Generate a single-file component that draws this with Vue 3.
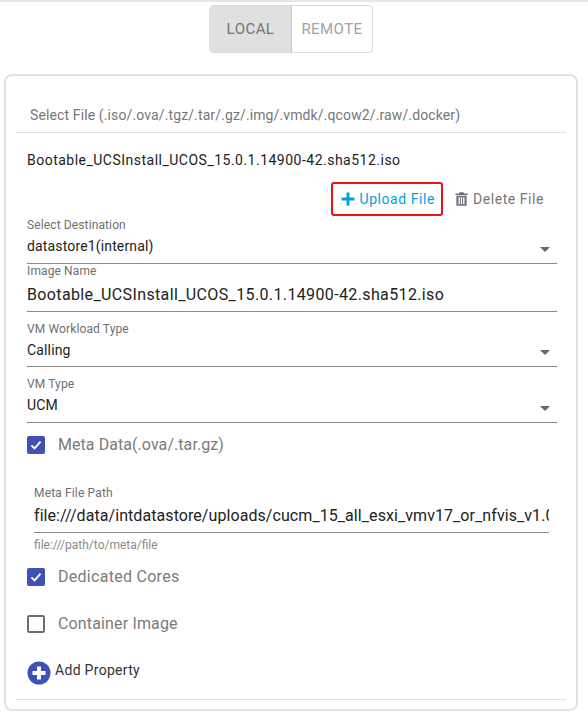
<script setup>
</script>

<template>
  <div class="page">
    <div class="toggle-row">
      <div class="toggle">
        <div class="tab active">LOCAL</div>
        <div class="tab">REMOTE</div>
      </div>
    </div>
    <div class="card">
      <div class="file-select">Select File (.iso/.ova/.tgz/.tar/.gz/.img/.vmdk/.qcow2/.raw/.docker)</div>
      <div class="file-name">Bootable_UCSInstall_UCOS_15.0.1.14900-42.sha512.iso</div>
      <div class="actions">
        <div class="btn upload">
          <svg width="14" height="14" viewBox="0 0 14 14"><path d="M5.500 .5h3v5H13.500v3H8.500v5h-3V8.500H.5v-3h5z" fill="#049fd9"/></svg>
          <span>Upload File</span>
        </div>
        <div class="btn delete">
          <svg width="13" height="16" viewBox="0 0 14 16"><path fill="#6b7078" fill-rule="evenodd" d="M5 .8h4l.7 1.200H13.500v1.600H.5V2h3.800zM1.500 4.600h11V15.200H1.500zM3.800 6.200v7.400h1.400V6.200zM6.300 6.200v7.400h1.400V6.200zM8.800 6.200v7.400h1.400V6.200z"/></svg>
          <span>Delete File</span>
        </div>
      </div>

      <div class="field f-dest">
        <label>Select Destination</label>
        <div class="control select"><span>datastore1(internal)</span><i class="caret"></i></div>
      </div>
      <div class="field f-image">
        <label>Image Name</label>
        <div class="control large"><span>Bootable_UCSInstall_UCOS_15.0.1.14900-42.sha512.iso</span></div>
      </div>
      <div class="field f-work">
        <label>VM Workload Type</label>
        <div class="control select"><span>Calling</span><i class="caret"></i></div>
      </div>
      <div class="field f-type">
        <label>VM Type</label>
        <div class="control select"><span>UCM</span><i class="caret"></i></div>
      </div>

      <div class="check c-meta">
        <span class="box on"><svg width="14" height="14" viewBox="0 0 16 16"><path d="M2.800 8.400l3.500 3.400 6.900-7.600" fill="none" stroke="#fff" stroke-width="2.200"/></svg></span>
        <span>Meta Data(.ova/.tar.gz)</span>
      </div>

      <div class="meta">
        <label>Meta File Path</label>
        <div class="meta-input">file:///data/intdatastore/uploads/cucm_15_all_esxi_vmv17_or_nfvis_v1.0.ova</div>
        <div class="hint">file:///path/to/meta/file</div>
      </div>

      <div class="check c-ded">
        <span class="box on"><svg width="14" height="14" viewBox="0 0 16 16"><path d="M2.800 8.400l3.500 3.400 6.900-7.600" fill="none" stroke="#fff" stroke-width="2.200"/></svg></span>
        <span>Dedicated Cores</span>
      </div>
      <div class="check c-cont">
        <span class="box"></span>
        <span>Container Image</span>
      </div>

      <div class="add">
        <svg width="24" height="24" viewBox="0 0 24 24"><circle cx="12" cy="12" r="11.500" fill="#3f51b5"/><path d="M10 5.500h4V10h4.500v4H14v4.500h-4V14H5.500v-4H10z" fill="#fff"/></svg>
        <span>Add Property</span>
      </div>
      <div class="end-rule"></div>
    </div>
  </div>
</template>

<style>
html, body { margin: 0; background: #fff; }
</style>

<style scoped>
.page {
  width: 588px;
  height: 720px;
  box-sizing: border-box;
  overflow: hidden;
  border-top: 2px solid #e6e6e6;
  font-family: Roboto, "Liberation Sans", sans-serif;
  padding-top: 3px;
}
.toggle-row { display: flex; justify-content: center; padding-right: 6px; }
.toggle {
  display: flex;
  height: 48px;
  border: 1px solid #dcdcdc;
  border-radius: 4px;
  overflow: hidden;
  box-sizing: border-box;
}
.tab {
  width: 80px;
  display: flex;
  align-items: center;
  justify-content: center;
  font-size: 15px;
  letter-spacing: 0.45px;
  color: #a3a3a3;
}
.tab.active {
  width: 81px;
  background: #e0e0e0;
  color: #6f7378;
  border-right: 1px solid #c4c4c4;
}
.card {
  margin: 21px 10px 0 4px;
  height: 637px;
  box-sizing: border-box;
  border: 2px solid #dfe2e6;
  border-radius: 8px;
  padding: 0 10px;
  display: flex;
  flex-direction: column;
}
.file-select {
  margin-top: 28px;
  height: 28px;
  padding-left: 14px;
  font-size: 14px;
  line-height: 22px;
  letter-spacing: 0.12px;
  color: #777;
  border-bottom: 1px solid #dfe2e6;
}
.file-name {
  margin-top: 17px;
  padding-left: 11px;
  font-size: 14px;
  line-height: 20px;
  letter-spacing: 0.49px;
  color: #222;
}
.actions {
  display: flex;
  justify-content: flex-end;
  align-items: center;
  margin-top: 12px;
  padding-right: 22px;
  gap: 12px;
}
.btn {
  display: flex;
  align-items: center;
  gap: 5px;
  font-size: 14px;
  letter-spacing: 0.56px;
  height: 34px;
  box-sizing: border-box;
}
.upload {
  color: #049fd9;
  border: 2px solid #f01010;
  border-radius: 3px;
  padding: 0 6px 0 8px;
}
.delete { color: #777; }
.field { padding: 0 9px 0 11px; display: flex; flex-direction: column; }
label {
  display: block;
  font-size: 12px;
  line-height: 14px;
  letter-spacing: 0.12px;
  color: #6f6f6f;
}
.control {
  position: relative;
  border-bottom: 1px solid #8a8a8a;
  color: #222;
  font-size: 14px;
  line-height: 20px;
  letter-spacing: 0.15px;
  margin-top: 1px;
}
.select { height: 31px; padding-top: 3px; box-sizing: border-box; }
.large {
  font-size: 16px;
  height: 33px;
  padding-top: 6px;
  box-sizing: border-box;
  letter-spacing: 0.37px;
}
.caret {
  position: absolute;
  right: 7px;
  bottom: 11px;
  border-left: 5px solid transparent;
  border-right: 5px solid transparent;
  border-top: 5px solid #666;
}
.f-dest { margin-top: 2px; }
.f-image { margin-top: 0; }
.f-work { margin-top: 10px; }
.f-type { margin-top: 10px; }
.f-work .control { margin-top: 2px; height: 29px; padding-top: 2px; }
.f-type .control { margin-top: 2px; height: 30px; padding-top: 2px; }
.check {
  display: flex;
  align-items: center;
  gap: 13px;
  margin-left: 11px;
  color: #7b7b7b;
  font-size: 16px;
  line-height: 20px;
  letter-spacing: 0.15px;
}
.box {
  width: 18px;
  height: 18px;
  border: 2px solid #6e6e6e;
  border-radius: 2px;
  display: block;
  flex: none;
  box-sizing: border-box;
}
.box.on { background: #3f51b5; border-color: #3f51b5; }
.box svg { display: block; }
.c-meta { margin-top: 12px; letter-spacing: 0.06px; }
.meta { margin: 0 17px 0 18px; }
.meta label { margin-top: 31px; letter-spacing: 0.15px; }
.meta-input {
  margin-top: 4px;
  font-size: 16px;
  line-height: 20px;
  letter-spacing: 0.07px;
  height: 29px;
  box-sizing: border-box;
  padding-top: 2px;
  color: #222;
  white-space: nowrap;
  overflow: hidden;
  border-bottom: 1px solid #8a8a8a;
}
.hint { margin-top: 5px; font-size: 12px; line-height: 14px; color: #8a8a8a; }
.c-ded { margin-top: 15px; letter-spacing: 0.28px; }
.c-cont { margin-top: 27px; }
.add {
  display: flex;
  align-items: flex-start;
  gap: 4px;
  margin: 26px 0 0 11px;
  font-size: 14px;
  line-height: 20px;
  letter-spacing: 0.3px;
  color: #333;
}
.add svg { flex: none; margin-top: 1px; }
.end-rule {
  margin-top: 14px;
  border-top: 1px solid #dfe2e6;
}
</style>
